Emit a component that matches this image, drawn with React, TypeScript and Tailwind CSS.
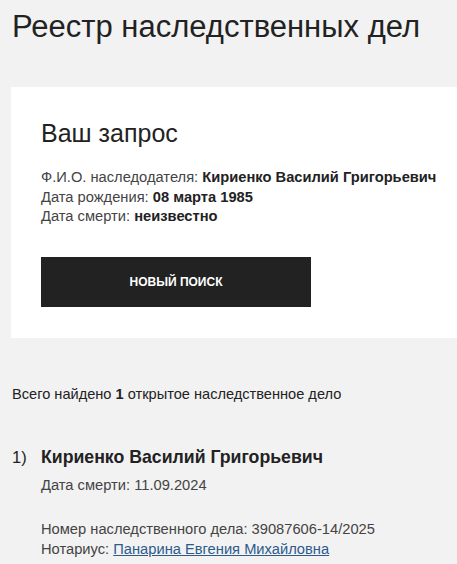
import React from 'react';

export default function App() {
    return (
        <div className="min-h-[564px] bg-[#f2f2f2] text-[#222] overflow-hidden font-['Liberation_Sans',Arial,sans-serif]">
            <h1 className="pl-3 pt-[9px] text-[31px] leading-[36px] font-normal">Реестр наследственных дел</h1>

            <section className="ml-[11px] mt-[42px] bg-white pl-[30px] pt-[31px] pb-[31px]">
                <h2 className="text-[25px] leading-[30px]">Ваш запрос</h2>
                <div className="mt-[20px] text-[14.7px] leading-[19.6px]">
                    <p><span className="text-[#444]">Ф.И.О. наследодателя:</span> <b>Кириенко Василий Григорьевич</b></p>
                    <p><span className="text-[#444]">Дата рождения:</span> <b>08 марта 1985</b></p>
                    <p><span className="text-[#444]">Дата смерти:</span> <b>неизвестно</b></p>
                </div>
                <button className="mt-[30px] w-[270px] h-[50px] bg-[#222] text-white text-[12px] font-bold uppercase">
                    Новый поиск
                </button>
            </section>

            <p className="pl-3 mt-[46px] text-[14.6px] leading-[20px]">
                Всего найдено <b>1</b> открытое наследственное дело
            </p>

            <div className="flex pl-3 mt-[40px]">
                <span className="w-[29px] text-[16.5px] leading-[26px]">1)</span>
                <div>
                    <h3 className="text-[17.7px] leading-[26px] font-bold">Кириенко Василий Григорьевич</h3>
                    <p className="mt-[5px] text-[14.7px] leading-[20px] text-[#444]">Дата смерти: 11.09.2024</p>
                    <div className="mt-[24px] text-[14.7px] leading-[20.5px] text-[#444]">
                        <p>Номер наследственного дела: 39087606-14/2025</p>
                        <p>Нотариус: <a href="#" className="text-[#2c5b8c] underline">Панарина Евгения Михайловна</a></p>
                    </div>
                </div>
            </div>
        </div>
    );
}
